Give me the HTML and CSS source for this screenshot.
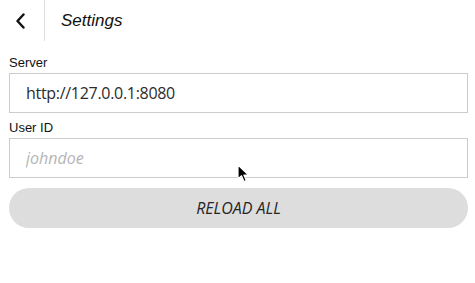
FILE: index.html
```html
<!DOCTYPE html>
<html lang="en">
<head>
  <meta charset="UTF-8" />
  <title>Settings</title>
  <meta name="viewport" content="width=device-width, initial-scale=1.0" />
  <link rel="stylesheet" href="styles.css">
</head>
<body>
  <!-- Header -->
  <header class="topbar">
    <a class="back" href="#">
      <svg width="11" height="16" viewBox="0 0 11 16">
        <path d="M8.5 1.5 L2.5 8 L8.5 14.5" fill="none" stroke="#111" stroke-width="2.4" stroke-linecap="round" stroke-linejoin="round" />
      </svg>
    </a>
    <h1 class="title">Settings</h1>
  </header>

  <!-- Settings form -->
  <form class="settings">
    <label for="server">Server</label>
    <input type="text" id="server" value="http://127.0.0.1:8080" />

    <label for="userId" class="next">User ID</label>
    <input type="text" id="userId" placeholder="johndoe" />

    <button type="button" class="reload">RELOAD ALL</button>
  </form>

  <!-- mouse pointer in the capture -->
  <svg class="pointer" width="14" height="20" viewBox="0 0 14 20">
    <path d="M1 1 L1 15 L4.5 11.8 L7 17.5 L9.3 16.5 L6.9 11 L11.5 11 Z" fill="#000" stroke="#fff" stroke-width="1.2" stroke-linejoin="round" />
  </svg>
</body>
</html>
```

FILE: styles.css
```css
* { box-sizing: border-box; }

body {
  margin: 0;
  font-family: 'Liberation Sans', Arial, sans-serif;
  background: #fff;
  color: #111;
}

.topbar {
  display: flex;
  align-items: center;
  height: 41px;
}

.back {
  width: 45px;
  height: 41px;
  display: flex;
  align-items: center;
  padding-left: 15px;
  border-right: 1px solid #ddd;
}

.title {
  margin: 0 0 0 16px;
  font-size: 17px;
  font-weight: normal;
  font-style: italic;
  color: #111;
}

.settings {
  display: flex;
  flex-direction: column;
  padding: 0 7px 0 9px;
}

label {
  font-size: 13px;
  line-height: 17px;
  margin-top: 13px;
  margin-bottom: 2px;
  color: #111;
}

label.next { margin-top: 6px; }

input[type="text"] {
  height: 40px;
  border: 1px solid #ccc;
  border-radius: 0;
  padding: 0 16px;
  font-family: 'Open Sans', sans-serif;
  font-size: 16px;
  letter-spacing: -0.3px;
  color: #2b2b2b;
  outline: none;
}

input::placeholder {
  color: #b5b5b5;
  font-style: italic;
  letter-spacing: 0;
}

.reload {
  height: 40px;
  margin-top: 10px;
  border: none;
  border-radius: 20px;
  background: #dddddd;
  font-family: 'Open Sans', sans-serif;
  font-size: 16px;
  font-style: italic;
  color: #262626;
  cursor: pointer;
}

.pointer {
  position: absolute;
  left: 237px;
  top: 164px;
}
```
